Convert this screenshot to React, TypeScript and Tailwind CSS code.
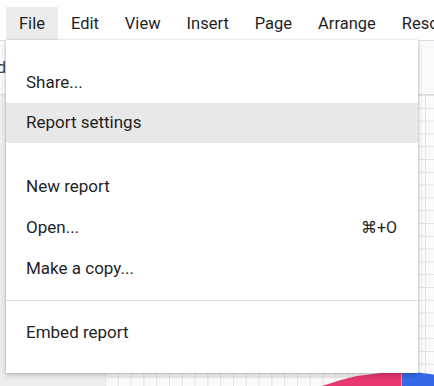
import React from "react";

const menuBar = ["File", "Edit", "View", "Insert", "Page", "Arrange", "Resource"];

interface MenuRow {
  label: string;
  shortcut?: string;
  active?: boolean;
  h: string;
}

const MenuItem: React.FC<MenuRow> = ({ label, shortcut, active, h }) => (
  <div
    className={`flex items-center justify-between pl-5 pr-[21px] ${h} ${
      active ? "bg-[#e8e8e8]" : ""
    }`}
  >
    <span>{label}</span>
    {shortcut && <span className="text-[16px]">{shortcut}</span>}
  </div>
);

export default function App() {
  return (
    <div className="relative flex h-[386px] w-[434px] flex-col overflow-hidden bg-white font-['Roboto',sans-serif] text-[#1f1f1f]">
      {/* Menu bar */}
      <div className="flex h-10 shrink-0 items-end pl-[6px] text-[16.5px]">
        {menuBar.map((m, i) => (
          <div
            key={m}
            className={`flex h-[33px] shrink-0 items-center px-[13px] pt-px ${
              i === 0 ? "bg-[#ececec]" : ""
            }`}
          >
            {m}
          </div>
        ))}
      </div>

      {/* Toolbar (mostly hidden by the menu) */}
      <div className="flex h-[55px] shrink-0 items-center border-y border-[#dadce0] bg-[#f8f9fa] text-[16px]">
        <span className="-ml-[3px] text-[#3c4043]">d</span>
      </div>

      {/* Workspace */}
      <div className="flex flex-1">
        <div className="w-[105px] shrink-0 bg-[#eeeeee]" />
        <div className="relative flex-1 bg-[#fafafa] bg-[linear-gradient(to_right,#e3e3e3_1px,transparent_1px),linear-gradient(to_bottom,#e3e3e3_1px,transparent_1px)] bg-[size:12.8px_12.8px]">
          <svg
            className="absolute bottom-0 right-0"
            width="120"
            height="16"
            viewBox="0 0 120 16"
          >
            <path d="M8 16 A230 230 0 0 1 87 2 L87 16 Z" fill="#e8386f" />
            <path d="M87.5 2 A230 230 0 0 1 120 4.4 L120 16 L87.5 16 Z" fill="#3369e8" />
          </svg>
        </div>
      </div>

      {/* File dropdown */}
      <div className="absolute left-[6px] top-10 flex w-[412px] flex-col bg-white pb-5 pt-[22px] text-[17px] shadow-[0_2px_5px_rgba(0,0,0,0.22),0_0_2px_rgba(0,0,0,0.12)]">
        <MenuItem label="Share..." h="h-[41px]" />
        <MenuItem label="Report settings" active h="h-10" />
        <div className="h-[23px]" />
        <MenuItem label="New report" h="h-[41px]" />
        <MenuItem label="Open..." shortcut="⌘+O" h="h-[41px]" />
        <MenuItem label="Make a copy..." h="h-[41px]" />
        <div className="mb-[11px] mt-[11px] h-px bg-[#dadada]" />
        <MenuItem label="Embed report" h="h-[41px]" />
      </div>
    </div>
  );
}
